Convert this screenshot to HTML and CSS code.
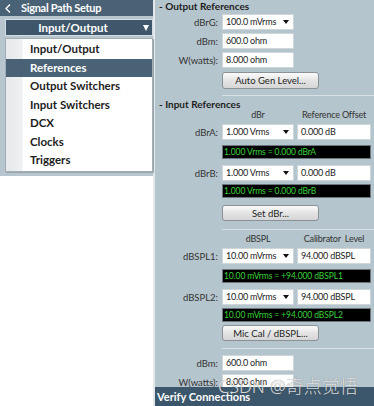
FILE: index.html
```html
<!DOCTYPE html>
<html lang="en">
<head>
  <meta charset="UTF-8" />
  <title>Signal Path Setup - References</title>
  <link rel="stylesheet" href="styles.css">
</head>
<body>
  <div class="app">

    <aside class="sidebar">
      <div class="side-top">
        <div class="side-head">
          <svg class="back" width="6" height="9" viewBox="0 0 6 9"><polyline points="5,0.5 1,4.5 5,8.5" fill="none" stroke="#fff" stroke-width="1.3"/></svg>
          <span>Signal Path Setup</span>
        </div>
        <div class="picker">
          <span>Input/Output</span>
          <i class="picker-caret"></i>
        </div>
        <ul class="menu">
          <li>Input/Output</li>
          <li class="active">References</li>
          <li>Output Switchers</li>
          <li>Input Switchers</li>
          <li>DCX</li>
          <li>Clocks</li>
          <li>Triggers</li>
        </ul>
      </div>
    </aside>

    <main class="panel">
      <div class="panel-body">
        <h2 class="group-title">- Output References</h2>
        <div class="field first">
          <span class="lbl">dBrG:</span>
          <div class="box select">100.0 mVrms<i class="caret"></i></div>
        </div>
        <div class="field">
          <span class="lbl">dBm:</span>
          <div class="box">600.0 ohm</div>
        </div>
        <div class="field">
          <span class="lbl">W(watts):</span>
          <div class="box">8.000 ohm</div>
        </div>
        <button class="btn btn-auto">Auto Gen Level...</button>
        <div class="sep sep-out"></div>

        <h2 class="group-title">- Input References</h2>
        <div class="col-head">
          <span class="col-a">dBr</span>
          <span class="col-b">Reference Offset</span>
        </div>
        <div class="field row-a">
          <span class="lbl">dBrA:</span>
          <div class="box select">1.000 Vrms<i class="caret"></i></div>
          <div class="box wide">0.000 dB</div>
        </div>
        <div class="display disp-1">1.000 Vrms = 0.000 dBrA</div>
        <div class="field row-b">
          <span class="lbl">dBrB:</span>
          <div class="box select">1.000 Vrms<i class="caret"></i></div>
          <div class="box wide">0.000 dB</div>
        </div>
        <div class="display disp-2">1.000 Vrms = 0.000 dBrB</div>
        <button class="btn btn-dbr">Set dBr...</button>
        <div class="sep sep-dbr"></div>

        <div class="col-head head-spl">
          <span class="col-a">dBSPL</span>
          <span class="col-b">Calibrator&nbsp; Level</span>
        </div>
        <div class="field row-a">
          <span class="lbl">dBSPL1:</span>
          <div class="box select">10.00 mVrms<i class="caret"></i></div>
          <div class="box wide">94.000 dBSPL</div>
        </div>
        <div class="display disp-1">10.00 mVrms = +94.000 dBSPL1</div>
        <div class="field row-b">
          <span class="lbl">dBSPL2:</span>
          <div class="box select">10.00 mVrms<i class="caret"></i></div>
          <div class="box wide">94.000 dBSPL</div>
        </div>
        <div class="display disp-2">10.00 mVrms = +94.000 dBSPL2</div>
        <button class="btn btn-mic">Mic Cal / dBSPL...</button>
        <div class="sep sep-mic"></div>

        <div class="field row-dbm">
          <span class="lbl">dBm:</span>
          <div class="box">600.0 ohm</div>
        </div>
        <div class="field">
          <span class="lbl">W(watts):</span>
          <div class="box">8.000 ohm</div>
        </div>
      </div>

      <div class="footer">Verify Connections</div>
      <div class="watermark">CSDN @奇点觉悟</div>
    </main>

  </div>
</body>
</html>
```

FILE: styles.css
```css
* {
  box-sizing: border-box;
}

body {
  margin: 0;
  width: 374px;
  height: 406px;
  overflow: hidden;
  font-family: Lato, "Open Sans", sans-serif;
  background-color: #ffffff;
}

.app {
  display: flex;
  height: 406px;
}

/* left column */

.sidebar {
  width: 155px;
  flex-shrink: 0;
  background-color: #ffffff;
  border-right: 2px solid #e2e7ea;
}

.side-top {
  background-color: #b7c6ce;
  padding-bottom: 4px;
}

.side-head {
  height: 16px;
  background-color: #4a6276;
  color: #ffffff;
  font-weight: 700;
  font-size: 11px;
  letter-spacing: -0.3px;
  display: flex;
  align-items: center;
  padding-left: 5px;
  gap: 10px;
}

.side-head span {
  line-height: 16px;
}

.picker {
  margin: 3px 0 2px 5px;
  width: 148px;
  height: 17px;
  background-color: #3f576a;
  border: 1px solid #d3dce1;
  color: #ffffff;
  font-weight: 700;
  font-size: 11.5px;
  display: flex;
  align-items: center;
  justify-content: center;
  padding-right: 12px;
  position: relative;
}

.picker-caret {
  position: absolute;
  right: 3px;
  top: 5px;
  width: 0;
  height: 0;
  border-left: 3.5px solid transparent;
  border-right: 3.5px solid transparent;
  border-top: 6px solid #ffffff;
}

.menu {
  list-style: none;
  margin: 0 0 0 5px;
  padding: 1px 0 1px 0;
  width: 148px;
  background: linear-gradient(to right, #e6e9eb 0, #eef0f1 16px, #ffffff 17px);
  border: 1px solid #a3aeb5;
  box-shadow: 1px 1px 0 #9aa6ad;
}

.menu li {
  height: 18.5px;
  line-height: 18.5px;
  padding-left: 24px;
  font-size: 11.5px;
  font-weight: 700;
  color: #1d1d1d;
}

.menu li.active {
  background-color: #4a6276;
  color: #ffffff;
}

/* right panel */

.panel {
  flex: 1;
  background-color: #b5c5cd;
  display: flex;
  flex-direction: column;
  position: relative;
}

.panel-body {
  flex: 1;
  overflow: hidden;
}

.group-title {
  margin: 0;
  padding-left: 4px;
  height: 12px;
  line-height: 12px;
  font-size: 10px;
  font-weight: 700;
  color: #1d1d1d;
}

.field {
  display: flex;
  align-items: center;
  height: 16px;
  margin-top: 3px;
}

.field.first {
  margin-top: 2px;
}

.lbl {
  width: 63px;
  margin-right: 4px;
  text-align: right;
  font-size: 9.5px;
  color: #333333;
}

.box {
  width: 72px;
  height: 16px;
  background-color: #ffffff;
  border: 1px solid #cfd6da;
  font-size: 9px;
  letter-spacing: -0.2px;
  line-height: 14px;
  padding-left: 3px;
  color: #222222;
  position: relative;
}

.box.wide {
  width: 74px;
  margin-left: 3px;
}

.caret {
  position: absolute;
  right: 4px;
  top: 5px;
  width: 0;
  height: 0;
  border-left: 3px solid transparent;
  border-right: 3px solid transparent;
  border-top: 4px solid #111111;
}

.btn {
  display: block;
  margin-left: 67px;
  width: 97px;
  height: 17px;
  padding: 0;
  background: linear-gradient(#fbfbfb, #e4e4e4 50%, #d6d6d6);
  border: 1px solid #8a9197;
  border-radius: 3px;
  font-family: inherit;
  font-size: 9.5px;
  color: #222222;
}

.btn-auto {
  margin-top: 4px;
}

.sep {
  margin-left: 67px;
  height: 0;
  border-top: 1px solid #d8e0e4;
}

.sep-out {
  margin-top: 6px;
  margin-bottom: 2px;
}

.col-head {
  display: flex;
  margin-left: 67px;
  height: 10px;
  line-height: 10px;
  font-size: 9px;
  letter-spacing: -0.2px;
  color: #333333;
}

.col-a {
  width: 72px;
  text-align: center;
}

.col-b {
  width: 74px;
  margin-left: 3px;
  text-align: center;
}

.row-a {
  margin-top: 4px;
}

.row-b {
  margin-top: 6px;
}

.display {
  margin-left: 67px;
  width: 149px;
  height: 14px;
  background-color: #000000;
  border: 1px solid #6b757b;
  color: #3ad23a;
  font-size: 8.5px;
  letter-spacing: -0.1px;
  line-height: 12px;
  padding-left: 1px;
}

.disp-1 {
  margin-top: 5px;
}

.disp-2 {
  margin-top: 3px;
}

.btn-dbr {
  margin-top: 7px;
  height: 16px;
}

.sep-dbr {
  margin-top: 8px;
}

.head-spl {
  margin-top: 4px;
}

.btn-mic {
  margin-top: 3px;
  height: 16px;
}

.sep-mic {
  margin-top: 7px;
}

.row-dbm {
  margin-top: 6px;
}

.footer {
  height: 19px;
  flex-shrink: 0;
  background-color: #3c566b;
  color: #ffffff;
  font-weight: 700;
  font-size: 11px;
  line-height: 19px;
  padding-left: 2px;
}

.watermark {
  position: absolute;
  left: 63px;
  top: 372px;
  font-family: "Noto Sans", "Noto Sans CJK SC", sans-serif;
  font-size: 18px;
  font-weight: 300;
  color: rgba(255, 255, 255, 0.8);
  text-shadow: 0 0 1px rgba(70, 70, 70, 0.7);
  white-space: nowrap;
}
```
